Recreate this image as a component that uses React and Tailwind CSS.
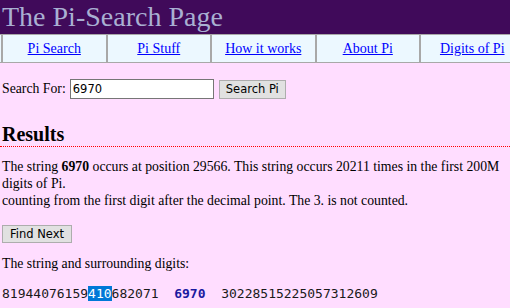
export default function App() {
  const links = ["Pi Search", "Pi Stuff", "How it works", "About Pi", "Digits of Pi"];

  return (
    <div className="min-h-[308px] w-[510px] overflow-hidden bg-[#ffddff] font-['Liberation_Serif','Times_New_Roman',Times,serif] text-[13.75px] text-black">
      {/* Header */}
      <div className="h-[34px] bg-[#400a5a] pl-[2px] text-[28px] leading-[34px] text-[#a9b0d2]">
        The Pi-Search Page
      </div>

      {/* Nav */}
      <div className="flex w-[526px] border-y border-[#a8a8a8] bg-[#ecf8ff] pl-px">
        {links.map((l) => (
          <div
            key={l}
            className="flex h-[27px] w-[104.5px] shrink-0 items-center justify-center border-l-2 border-[#a8a8a8] text-[14px]"
          >
            <a href="#" className="text-[#0000ff] underline">
              {l}
            </a>
          </div>
        ))}
      </div>

      <div className="px-[2px]">
        {/* Search form */}
        <div className="mt-[16px] flex items-center">
          <span>Search For:</span>
          <input
            defaultValue="6970"
            className="ml-[4px] h-[20px] w-[144px] border border-[#767676] bg-white px-[2px] font-['DejaVu_Sans',sans-serif] text-[11.5px] text-black outline-none"
          />
          <button className="ml-[5px] h-[19px] w-[67px] border border-[#adadad] bg-[#e1e1e1] font-['DejaVu_Sans',sans-serif] text-[11.5px] leading-[17px] text-black">
            Search Pi
          </button>
        </div>

        {/* Results */}
        <h2 className="mt-[22px] text-[20px] font-bold leading-[24px]">Results</h2>
      </div>
      <div className="border-b border-dotted border-[#ff0000]" />

      <div className="px-[2px]">
        <p className="mt-[11px] leading-[17px]">
          The string <b>6970</b> occurs at position 29566. This string occurs 20211 times in the first 200M digits of Pi.
          <br />
          counting from the first digit after the decimal point. The 3. is not counted.
        </p>

        <button className="mt-[16px] h-[18px] w-[70px] border border-[#adadad] bg-[#e1e1e1] font-['DejaVu_Sans',sans-serif] text-[11.5px] leading-[16px] text-black">
          Find Next
        </button>

        <p className="mt-[11px] leading-[17px]">The string and surrounding digits:</p>

        <div className="mt-[13px] whitespace-pre font-['DejaVu_Sans_Mono',monospace] text-[13px] leading-[18px] text-[#1a1a1a]">
          81944076159<span className="bg-[#0078d7] text-white">410</span>682071{"  "}
          <b className="text-[#1a1aa0]">6970</b>
          {"  "}30228515225057312609
        </div>
      </div>
    </div>
  );
}
